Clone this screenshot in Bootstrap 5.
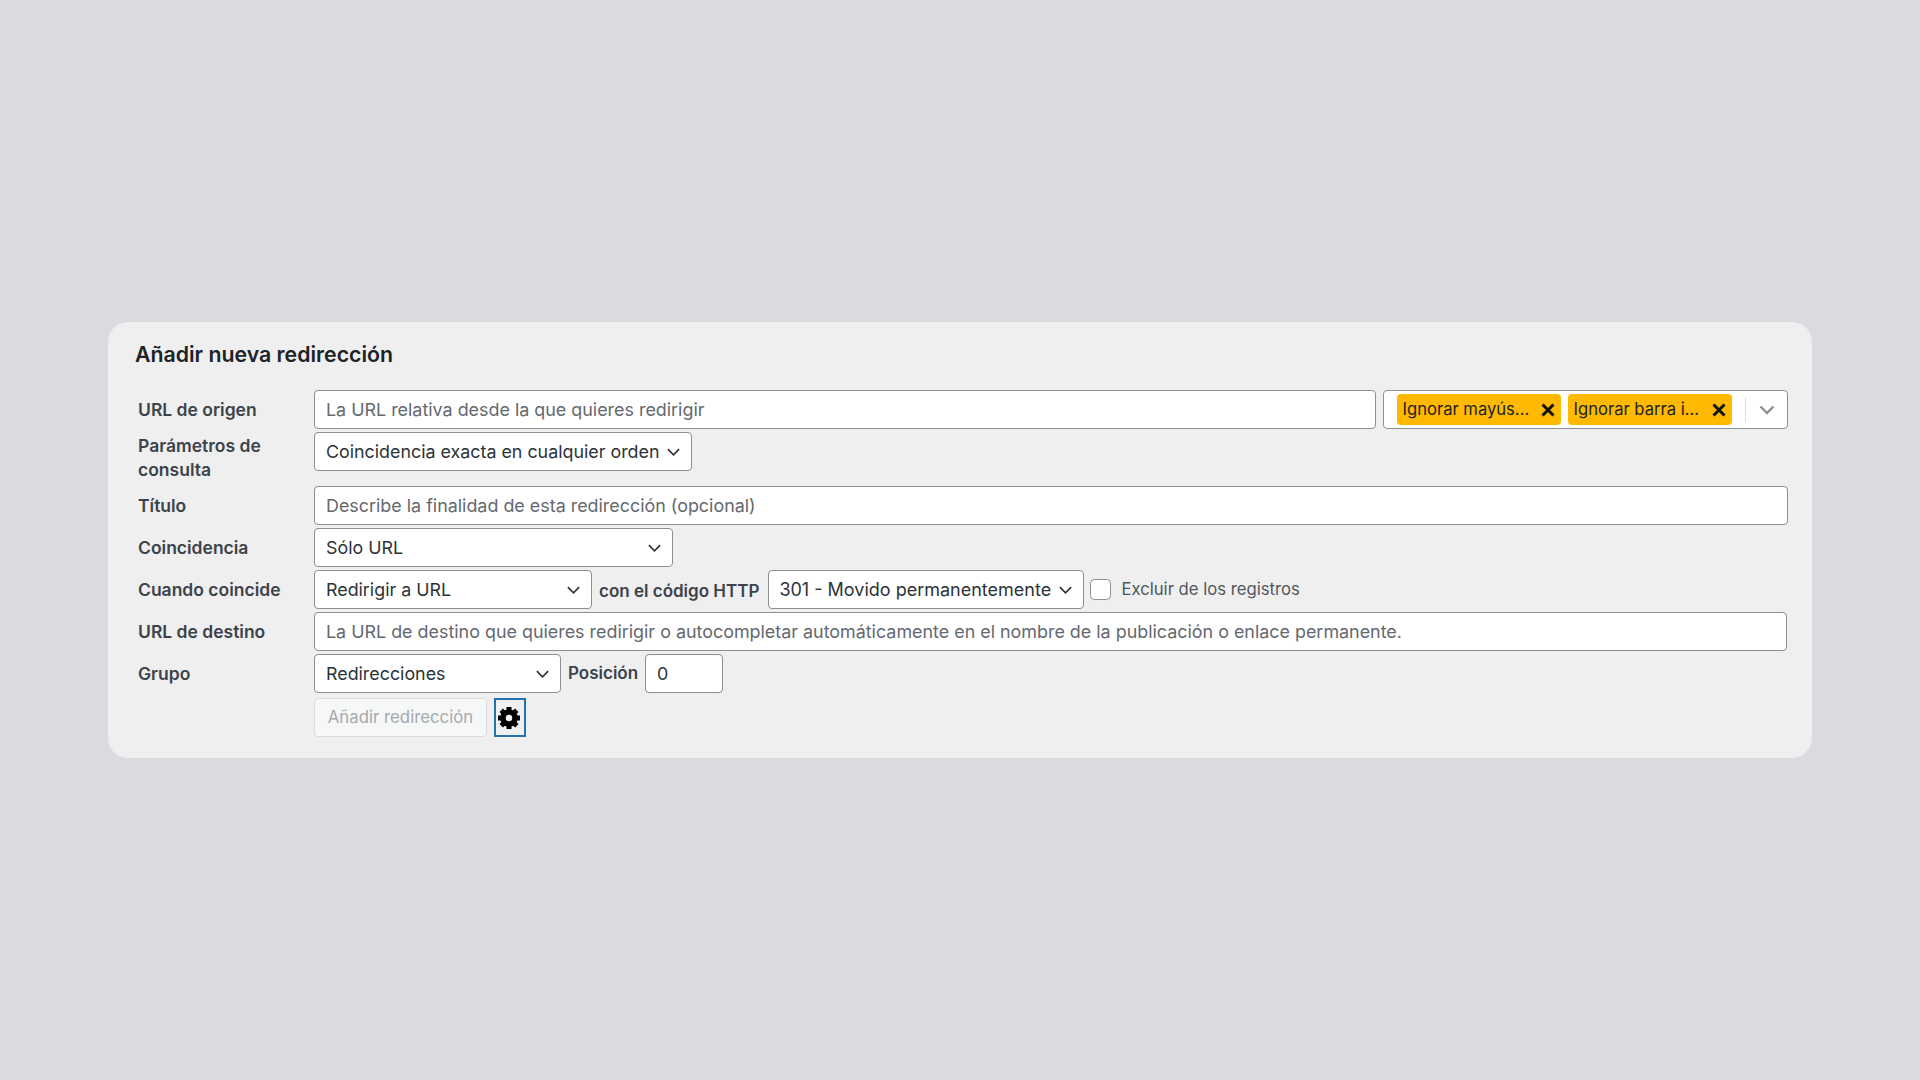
<!DOCTYPE html>
<html lang="es">
<head>
<meta charset="utf-8">
<title>Añadir nueva redirección</title>
<link href="https://cdn.jsdelivr.net/npm/bootstrap@5.3.0/dist/css/bootstrap.min.css" rel="stylesheet">
<style>
html,body{height:100%}
body{background:#dadbe0;font-family:Inter,"Liberation Sans",sans-serif;font-size:17.6px;color:#2c3338}
.stage{height:1080px;padding:322px 108px 0}
.panel{background:#efefef;border-radius:20px;height:436px;padding:0 24px 0 26px}
.panel-title{font-size:21.3px;font-weight:600;color:#1d2327;margin:0 0 0 1px;padding-top:18px;height:68px;line-height:28px}
.frow{display:flex;align-items:center;padding-left:4px;margin-bottom:3px;min-height:39px}
.frow.tall{min-height:51px;margin-bottom:3px}
.flabel{width:176px;flex:none;font-weight:600;font-size:17.5px;line-height:24px;color:#3c434a;padding-right:20px}
.wfield{height:39px;border:1px solid #8c8f94;border-radius:4px;background-color:#fff;padding:0 11px;font-size:17.9px;color:#2c3338;box-shadow:none;line-height:37px}
.wfield::placeholder{color:#646970;opacity:1}
.wselect{appearance:none;font-size:17.85px;background-image:url("data:image/svg+xml,%3Csvg xmlns='http://www.w3.org/2000/svg' viewBox='0 0 16 10'%3E%3Cpath d='M2 2l6 6 6-6' fill='none' stroke='%23333' stroke-width='1.8'/%3E%3C/svg%3E");background-repeat:no-repeat;background-position:right 10px center;background-size:15px 10px;padding-right:30px}
.src-row{padding-top:1px;margin-top:-1px}
.w-src{flex:1 1 auto;min-width:0}
.w-params{width:378px}
.w-match{width:359px}
.w-action{width:278px}
.w-code{width:316px;font-size:18px;padding-left:10px}
.w-group{width:247px}
.w-pos{width:78px}
.inline-lab{font-weight:600;font-size:17px;color:#3c434a;white-space:nowrap}
.lab-code{margin:5px 9px 0 7px}
.lab-pos{margin:0 7px 0 7px}
.multi{width:405px;flex:none;margin-left:7px;display:flex;align-items:center;padding:0 0 0 13px;gap:6px}
.chip{width:164px;height:31px;background:#ffb900;border-radius:4px;display:flex;align-items:center;justify-content:space-between;padding:0 5px 0 5.5px;color:#1d2327;font-size:16.6px}
.chip+.chip{margin-left:1px}
.chip svg{display:block}
.multi-sep{width:1px;height:25px;background:#dcdcde;margin-left:7px}
.multi-arrow{margin-left:7px;display:block}
.check{width:21px;height:21px;margin:0 0 0 6px;border:1px solid #8c8f94;border-radius:5px;background-color:#fff;flex:none}
.check-lab{font-size:16.7px;color:#50575e;margin-left:10px}
.w-dest{flex:1 1 auto;min-width:0;margin-right:1px}
.actions{display:flex;align-items:center;margin-left:176px;gap:7px;padding-top:2px}
.btn-add{height:39px;width:173px;font-size:16.8px;padding:1px 0 0;--bs-btn-disabled-bg:#f6f7f7;--bs-btn-disabled-border-color:#dcdcde;--bs-btn-disabled-color:#a7aaad;--bs-btn-disabled-opacity:1;border-radius:4px}
.btn-gear{width:32px;height:39px;padding:0 2px 0 0;border:2px solid #2271b1;border-radius:0;background:#f0f0f1;display:flex;align-items:center;justify-content:center}
</style>
</head>
<body>
<div class="stage">
<div class="panel">
<h2 class="panel-title">Añadir nueva redirección</h2>

<div class="frow">
<div class="flabel">URL de origen</div>
<input class="form-control wfield w-src" type="text" placeholder="La URL relativa desde la que quieres redirigir">
<div class="multi wfield">
<span class="chip"><span>Ignorar mayús...</span><svg width="16" height="16" viewBox="0 0 16 16"><path d="M2.5 2.5l11 11M13.5 2.5l-11 11" stroke="#111" stroke-width="3"/></svg></span>
<span class="chip"><span>Ignorar barra i...</span><svg width="16" height="16" viewBox="0 0 16 16"><path d="M2.5 2.5l11 11M13.5 2.5l-11 11" stroke="#111" stroke-width="3"/></svg></span>
<span class="multi-sep"></span>
<svg class="multi-arrow" width="16" height="10" viewBox="0 0 16 10"><path d="M1.5 1.5L8 8l6.5-6.5" fill="none" stroke="#8c8f94" stroke-width="2.4"/></svg>
</div>
</div>

<div class="frow tall">
<div class="flabel">Parámetros de consulta</div>
<select class="form-select wfield wselect w-params align-self-start"><option>Coincidencia exacta en cualquier orden</option></select>
</div>

<div class="frow">
<div class="flabel">Título</div>
<input class="form-control wfield" type="text" placeholder="Describe la finalidad de esta redirección (opcional)">
</div>

<div class="frow">
<div class="flabel">Coincidencia</div>
<select class="form-select wfield wselect w-match"><option>Sólo URL</option></select>
</div>

<div class="frow">
<div class="flabel">Cuando coincide</div>
<select class="form-select wfield wselect w-action"><option>Redirigir a URL</option></select>
<span class="inline-lab lab-code">con el código HTTP</span>
<select class="form-select wfield wselect w-code"><option>301 - Movido permanentemente</option></select>
<input class="form-check-input check" type="checkbox" aria-label="Excluir de los registros">
<span class="check-lab">Excluir de los registros</span>
</div>

<div class="frow">
<div class="flabel">URL de destino</div>
<input class="form-control wfield w-dest" type="text" placeholder="La URL de destino que quieres redirigir o autocompletar automáticamente en el nombre de la publicación o enlace permanente.">
</div>

<div class="frow">
<div class="flabel">Grupo</div>
<select class="form-select wfield wselect w-group"><option>Redirecciones</option></select>
<span class="inline-lab lab-pos">Posición</span>
<input class="form-control wfield w-pos" type="text" value="0">
</div>

<div class="frow">
<div class="actions">
<button class="btn btn-add" type="button" disabled>Añadir redirección</button>
<button class="btn btn-gear" type="button" aria-label="Ajustes">
<svg width="24" height="24" viewBox="0 0 24 24"><circle cx="12" cy="12" r="6" fill="none" stroke="#000" stroke-width="5.5"/><path d="M12 1v5M12 18v5M1 12h5M18 12h5M4.2 4.2l3.6 3.6M16.2 16.2l3.6 3.6M19.8 4.2l-3.6 3.6M7.8 16.2l-3.6 3.6" stroke="#000" stroke-width="5"/></svg>
</button>
</div>
</div>

</div>
</div>
</body>
</html>
